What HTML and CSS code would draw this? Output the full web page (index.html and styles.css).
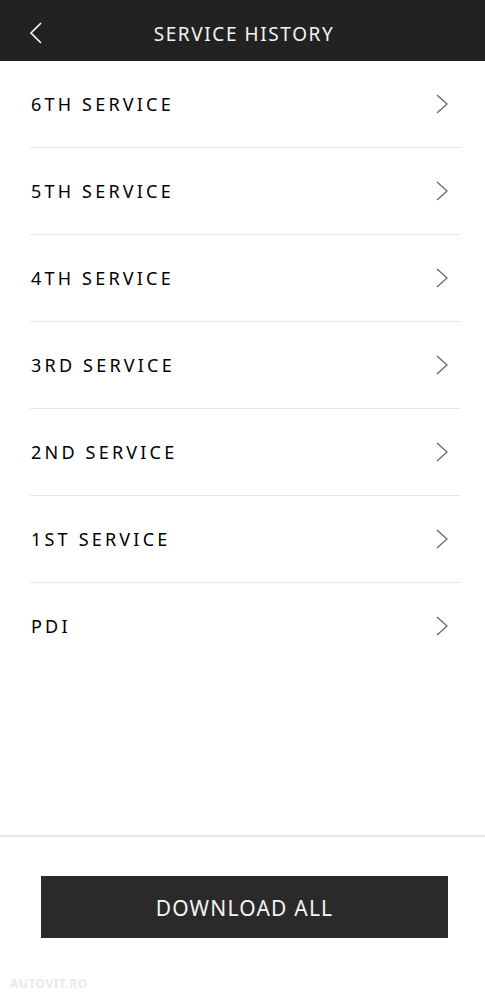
FILE: index.html
```html
<!DOCTYPE html>
<html>
<head>
<meta charset="utf-8">
<link rel="stylesheet" href="styles.css">
</head>
<body>
<div class="page">
  <header class="topbar">
    <span class="back">
      <svg width="14" height="22" viewBox="0 0 14 22"><path d="M12 1 L2 11 L12 21" fill="none" stroke="#fff" stroke-width="1.6"/></svg>
    </span>
    <h1 class="title">SERVICE HISTORY</h1>
  </header>
  <ul class="list">
    <li class="row"><span class="label">6TH SERVICE</span><svg class="chev" width="13" height="20" viewBox="0 0 13 20"><path d="M1 1 L11 10 L1 19" fill="none" stroke="#6a6a6a" stroke-width="1.3"/></svg></li>
    <li class="row"><span class="label">5TH SERVICE</span><svg class="chev" width="13" height="20" viewBox="0 0 13 20"><path d="M1 1 L11 10 L1 19" fill="none" stroke="#6a6a6a" stroke-width="1.3"/></svg></li>
    <li class="row"><span class="label">4TH SERVICE</span><svg class="chev" width="13" height="20" viewBox="0 0 13 20"><path d="M1 1 L11 10 L1 19" fill="none" stroke="#6a6a6a" stroke-width="1.3"/></svg></li>
    <li class="row"><span class="label">3RD SERVICE</span><svg class="chev" width="13" height="20" viewBox="0 0 13 20"><path d="M1 1 L11 10 L1 19" fill="none" stroke="#6a6a6a" stroke-width="1.3"/></svg></li>
    <li class="row"><span class="label">2ND SERVICE</span><svg class="chev" width="13" height="20" viewBox="0 0 13 20"><path d="M1 1 L11 10 L1 19" fill="none" stroke="#6a6a6a" stroke-width="1.3"/></svg></li>
    <li class="row"><span class="label">1ST SERVICE</span><svg class="chev" width="13" height="20" viewBox="0 0 13 20"><path d="M1 1 L11 10 L1 19" fill="none" stroke="#6a6a6a" stroke-width="1.3"/></svg></li>
    <li class="row last"><span class="label">PDI</span><svg class="chev" width="13" height="20" viewBox="0 0 13 20"><path d="M1 1 L11 10 L1 19" fill="none" stroke="#6a6a6a" stroke-width="1.3"/></svg></li>
  </ul>
  <div class="spacer"></div>
  <footer class="footer">
    <button class="download">DOWNLOAD ALL</button>
    <div class="mark">AUTOVIT.RO</div>
  </footer>
</div>
</body>
</html>
```

FILE: styles.css
```css
html, body {
  margin: 0;
  padding: 0;
  background: #fff;
}
body {
  font-family: "Noto Sans", "Liberation Sans", sans-serif;
}
.page {
  width: 485px;
  height: 1000px;
  display: flex;
  flex-direction: column;
  overflow: hidden;
}
.topbar {
  height: 61px;
  background: #222222;
  display: flex;
  align-items: center;
  justify-content: center;
  position: relative;
  flex: none;
}
.back {
  position: absolute;
  left: 29px;
  top: 22px;
  display: block;
  line-height: 0;
}
.title {
  margin: 0;
  color: #f4f4f4;
  font-size: 19px;
  font-weight: 400;
  letter-spacing: 1.6px;
  padding-top: 6px;
  padding-left: 3px;
}
.list {
  list-style: none;
  margin: 0;
  padding: 0 25px 0 30px;
}
.row {
  height: 86px;
  border-bottom: 1px solid #e6e6e6;
  display: flex;
  align-items: center;
  justify-content: space-between;
}
.row.last {
  border-bottom: none;
}
.label {
  font-size: 18px;
  letter-spacing: 3.2px;
  color: #000;
  font-weight: 400;
  padding-left: 1px;
}
.chev {
  margin-right: 11px;
}
.spacer {
  flex: 1;
}
.footer {
  border-top: 2px solid #e4e4e4;
  height: 163px;
  flex: none;
  display: flex;
  flex-direction: column;
  align-items: flex-start;
  padding-left: 41px;
  position: relative;
}
.download {
  margin-top: 39px;
  width: 407px;
  height: 62px;
  background: #2a2a2a;
  border: none;
  color: #f4f4f4;
  font-family: inherit;
  font-size: 21px;
  letter-spacing: 1.2px;
  padding: 2px 0 0 0;
}
.mark {
  position: absolute;
  left: 10px;
  bottom: 8px;
  font-size: 12px;
  color: #eaeaea;
  font-weight: 700;
  letter-spacing: 0.5px;
}
```
